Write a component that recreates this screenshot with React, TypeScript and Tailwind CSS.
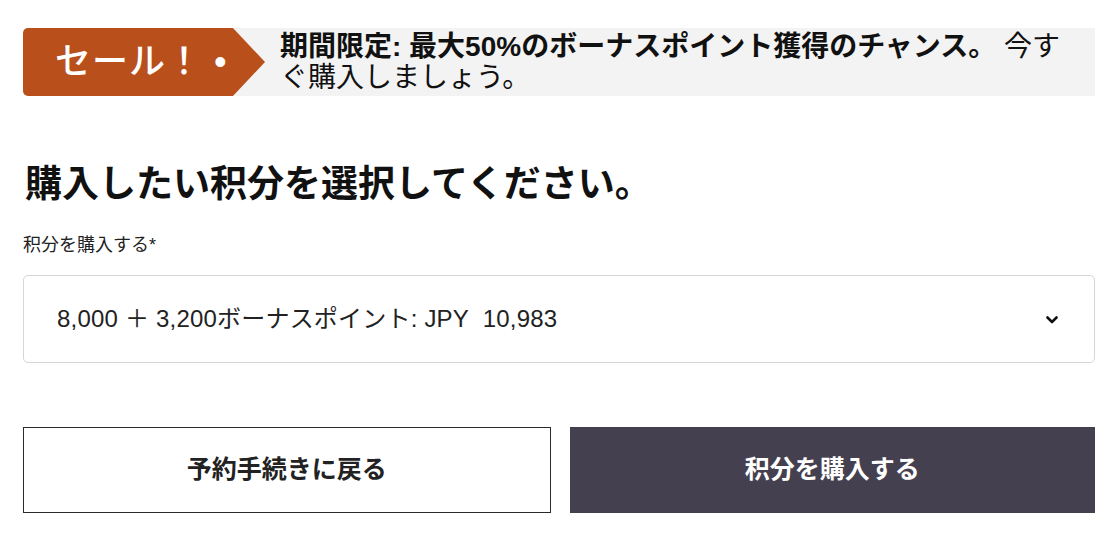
import React from "react";

const font = { fontFamily: '"Liberation Sans", "Noto Sans CJK JP", sans-serif' };

export default function App() {
  return (
    <div className="w-[1114px] h-[542px] bg-white text-[#1a1a1a] overflow-hidden" style={font}>
      <div className="px-[23px] pt-[28px]">
        {/* banner */}
        <div className="flex h-[68px] w-[1072px]">
          <div
            className="relative z-10 flex items-center h-[68px] w-[242px] shrink-0 bg-[#b9501c] rounded-l-[5px] pl-[32px] text-white text-[36px] font-medium tracking-[1px]"
            style={{ clipPath: "polygon(0 0, 210px 0, 242px 34px, 210px 68px, 0 68px)" }}
          >
            セール！ •
          </div>
          <div className="flex-1 bg-[#f3f3f3] flex items-center pr-[16px] -ml-[30px]">
            <p className="text-[28px] leading-[31px] text-[#111] pl-[45px]">
              <span className="font-bold">期間限定: 最大50%のボーナスポイント獲得のチャンス。</span> 今すぐ購入しましょう。
            </p>
          </div>
        </div>

        {/* heading */}
        <h1 className="mt-[67px] text-[37px] leading-[44px] font-bold text-[#111] pl-[2px]">
          購入したい积分を選択してください。
        </h1>

        <div className="mt-[26px] text-[18px] leading-[24px] text-[#222]">积分を購入する*</div>

        {/* select */}
        <div className="mt-[18px] h-[88px] w-[1072px] border border-[#d6d6d6] rounded-[5px] flex items-center justify-between pl-[33px] pr-[36px]">
          <span className="text-[24px] text-[#222] tracking-[0.2px]">8,000 ＋ 3,200ボーナスポイント: JPY&nbsp; 10,983</span>
          <svg width="12" height="8" viewBox="0 0 12 8" className="mt-[2px]">
            <path d="M1.5 1.5 L6 6 L10.5 1.5" fill="none" stroke="#111" strokeWidth="2.6" strokeLinecap="round" strokeLinejoin="round" />
          </svg>
        </div>

        {/* buttons */}
        <div className="mt-[64px] flex gap-[19px] w-[1072px]">
          <button className="flex-1 h-[86px] border-[1.5px] border-[#2a2a2a] bg-white text-[25px] font-semibold text-[#222] flex items-center justify-center">
            予約手続きに戻る
          </button>
          <button className="flex-1 h-[86px] bg-[#45404f] text-[25px] font-semibold text-white flex items-center justify-center">
            积分を購入する
          </button>
        </div>
      </div>
    </div>
  );
}
